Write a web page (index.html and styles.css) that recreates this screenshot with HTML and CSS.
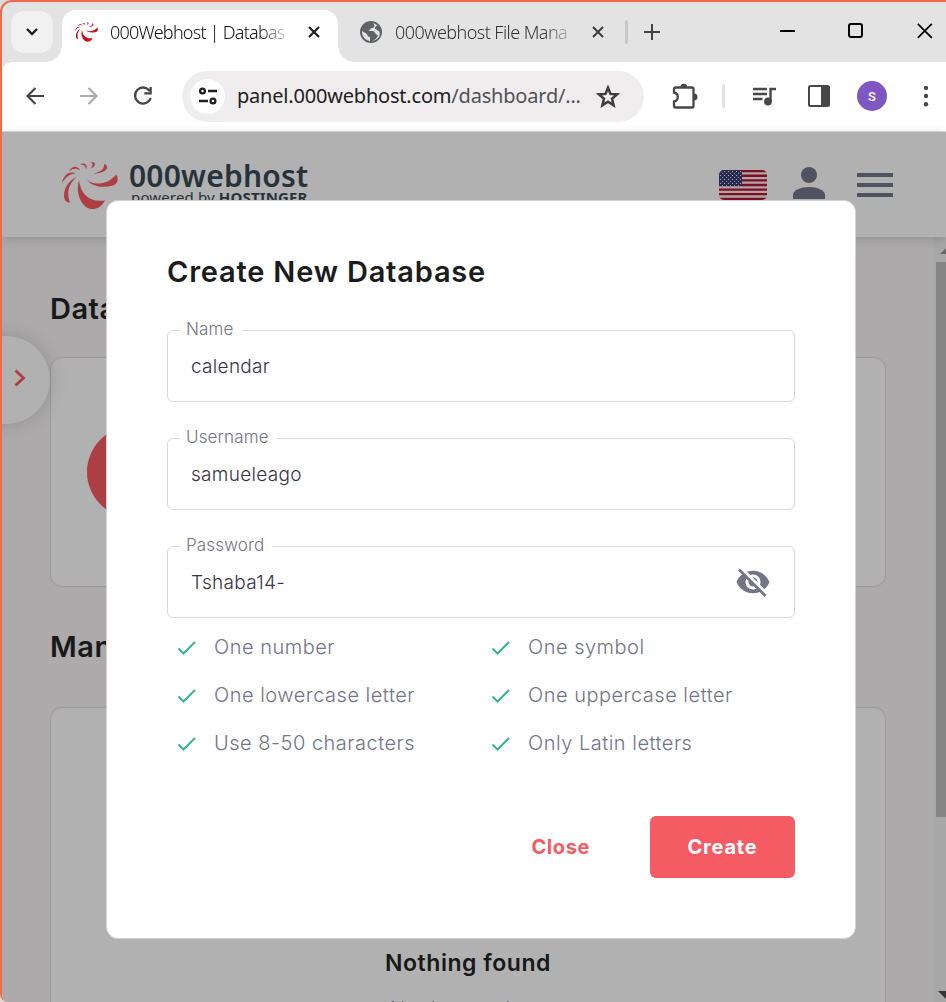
FILE: index.html
```
<!DOCTYPE html>
<html lang="en">
<head>
<meta charset="utf-8">
<title>000Webhost | Database Manager</title>
<link rel="stylesheet" href="styles.css">
</head>
<body>
<svg class="defs" width="0" height="0">
  <symbol id="swirl" viewBox="0 0 56 48">
    <path d="M25 18C30 24 46 24 54 13C57 17 56 22 51 24C41 27 29 25 25 18Z"/>
    <path d="M17 19C19 32 26 41 43 39C39 46 34 48 29 47.500C20 46 13 32 17 19Z"/>
    <path d="M15 15C7 22 4 30 8 41C5 41.500 2 39 2 34C2 26 7 19 15 15Z"/>
    <path d="M31 12C38 10.500 43 8 42 2.500C48 4 46 12 31 12Z"/>
    <path d="M28 7C31.500 5 31 2 29 0.500C35 0 34 6 28 7Z"/>
    <path d="M24 8C24 5 22 3 18 3C21 0.500 27 3 24 8Z"/>
    <path d="M18 9C14 6 10 7 7 10C10 4 16 4 18 9Z"/>
    <path d="M14 12C8 12 3 16 0 22C1 14 7 9 14 12Z"/>
  </symbol>
  <symbol id="check" viewBox="0 0 20 16">
    <path d="M1.5 8.500L6.500 13.500L18 2" fill="none" stroke="#35b58b" stroke-width="2"/>
  </symbol>
</svg>
<div class="window">
  <div class="tabstrip">
    <div class="tab-search"><svg width="14" height="10" viewBox="0 0 14 10"><path d="M2 2l5 5 5-5" fill="none" stroke="#1f1f1f" stroke-width="2.4"/></svg></div>
    <div class="tab tab-active">
      <svg class="favicon" width="23" height="20"><use href="#swirl"/></svg>
      <span class="tab-title t1">000Webhost | Databas</span>
      <svg class="tab-close" width="12" height="12" viewBox="0 0 12 12"><path d="M1 1l10 10M11 1L1 11" stroke="#1f1f1f" stroke-width="2.2"/></svg>
    </div>
    <div class="tab tab-idle">
      <svg class="globe" width="22" height="22" viewBox="0 0 22 22"><circle cx="11" cy="11" r="11" fill="#5f6368"/><path d="M13 2C15 4 15 7 12 7C10 7 10 10 8 10H13C15 10 15 14 18 14C17 18 13 20 10 20V16C8 16 7 14 7 13L2 10C2 13 3 17 7 19C10 21 16 20 19 16C20 14 20 12 19 10C17 10 17 8 15 8C15 5 17 5 17 4Z" fill="#e3e3e3"/></svg>
      <span class="tab-title t2">000webhost File Mana</span>
      <svg class="tab-close" width="12" height="12" viewBox="0 0 12 12"><path d="M1 1l10 10M11 1L1 11" stroke="#3c3c3c" stroke-width="2"/></svg>
    </div>
    <i class="tab-sep"></i>
    <svg class="plus" width="16" height="16" viewBox="0 0 16 16"><path d="M8 0v16M0 8h16" stroke="#444" stroke-width="2"/></svg>
    <div class="controls">
      <svg width="15" height="16" viewBox="0 0 15 16"><path d="M0 8h15" stroke="#000" stroke-width="2"/></svg>
      <svg width="16" height="16" viewBox="0 0 16 16"><rect x="1" y="1" width="13" height="13" rx="2" fill="none" stroke="#000" stroke-width="2"/></svg>
      <svg width="16" height="16" viewBox="0 0 16 16"><path d="M.8.8l14 14M14.800.8L.8 14.800" stroke="#000" stroke-width="1.800"/></svg>
    </div>
  </div>

  <div class="toolbar">
    <svg class="back" width="18" height="18" viewBox="0 0 18 18"><path d="M18 9H2M9.500 1L1.500 9l8 8" fill="none" stroke="#474747" stroke-width="2.200"/></svg>
    <svg class="fwd" width="18" height="18" viewBox="0 0 18 18"><path d="M0 9h16M8.500 1l8 8-8 8" fill="none" stroke="#ababab" stroke-width="2.200"/></svg>
    <svg class="reload" width="20" height="20" viewBox="0 0 20 20"><path d="M16.700 5A8 8 0 1 0 17.700 12" fill="none" stroke="#474747" stroke-width="2.300"/><path d="M18.800 1v7.500h-7.500V6.300h5.200V1z" fill="#474747"/></svg>
    <div class="omnibox">
      <span class="site"><svg width="20" height="18" viewBox="0 0 20 18" fill="none" stroke="#1f1f1f" stroke-width="2.300"><circle cx="4.500" cy="4" r="2.400"/><path d="M10 4h9M1 14h9"/><circle cx="15" cy="14" r="2.400"/></svg></span>
      <span class="url">panel.000webhost.com<span class="path">/dashboard/...</span></span>
      <svg class="star" width="24" height="23" viewBox="0 0 24 23"><path d="M12 2.700l2.500 6.200 6.600.5-5.100 4.300 1.600 6.500L12 16.700l-5.600 3.500L8 13.700 2.900 9.400l6.600-.5z" fill="none" stroke="#3c3c3c" stroke-width="2.500"/></svg>
    </div>
    <svg class="ext" width="26" height="26" viewBox="0 0 26 26"><path d="M4 4.500h16q1.500 0 1.500 1.500v17q0 1.500-1.500 1.500H3.500Q2 24.500 2 23v-4.500c5-1 5-8 0-9V6q0-1.500 2-1.500z" fill="none" stroke="#474747" stroke-width="2.300"/><path d="M8.500 4a3.300 3.300 0 0 1 6.600 0zM22 10.500a3.500 3.500 0 0 1 0 7z" fill="#474747"/></svg>
    <i class="tool-sep"></i>
    <svg class="media" width="24" height="19" viewBox="0 0 24 19"><path d="M0 2h14M0 7h14M0 12h9.500M17.500 14V2H23" fill="none" stroke="#474747" stroke-width="2.400"/><circle cx="15" cy="14.500" r="3.900" fill="#474747"/></svg>
    <svg class="panel" width="22" height="22" viewBox="0 0 22 22"><rect x="1" y="1" width="20" height="20" rx="1.500" fill="none" stroke="#474747" stroke-width="2"/><path d="M13 1h8v20h-8z" fill="#474747"/></svg>
    <span class="avatar">S</span>
    <svg class="dots" width="6" height="22" viewBox="0 0 6 22" fill="#474747"><circle cx="3" cy="2.900" r="2.200"/><circle cx="3" cy="11" r="2.200"/><circle cx="3" cy="19.200" r="2.200"/></svg>
  </div>

  <div class="page">
    <header class="site-header">
      <svg class="logo-mark" width="56" height="49" viewBox="0 0 56 48"><use href="#swirl"/></svg>
      <div class="brand"><div class="brand-name">000webhost</div><div class="brand-sub">powered by <b>HOSTINGER</b></div></div>
      <svg class="flag" width="48" height="30" viewBox="0 0 48 30">
        <defs><clipPath id="fc"><rect width="48" height="30" rx="5"/></clipPath>
        <pattern id="stars" width="4" height="4" patternUnits="userSpaceOnUse"><rect x="1" y="1" width="1" height="1" fill="#a5a5b5"/><rect x="3" y="3" width="1" height="1" fill="#9090a5"/></pattern></defs>
        <g clip-path="url(#fc)"><rect width="48" height="30" fill="#b0a5a9"/><path d="M0 1.150h48M0 5.770h48M0 10.380h48M0 15h48M0 19.600h48M0 24.200h48M0 28.850h48" stroke="#7e1022" stroke-width="2.310"/><rect width="23" height="16" fill="#2b2b52"/><rect width="23" height="16" fill="url(#stars)"/></g>
      </svg>
      <svg class="user" width="32" height="32" viewBox="0 0 32 32" fill="#50525f"><circle cx="16" cy="8" r="8"/><path d="M0 32v-4c0-5 8-8 16-8s16 3 16 8v4z"/></svg>
      <div class="burger"><i></i><i></i><i></i></div>
    </header>
    <main class="content">
      <h2>Databases</h2>
      <section class="card card-top"><span class="disc"></span></section>
      <h2 class="second">Manage</h2>
      <section class="card card-list"><div class="empty">Nothing found</div><div class="empty-sub">No data to show</div></section>
    </main>
    <div class="drawer"><svg width="12" height="18" viewBox="0 0 12 18"><path d="M1.500 1.500L9.500 9l-8 7.500" fill="none" stroke="#ac3e44" stroke-width="2.800"/></svg></div>
    <div class="scrollbar"><i class="up"></i><i class="thumb"></i><i class="down"></i></div>
  </div>

  <div class="modal">
    <h1>Create New Database</h1>
    <fieldset><legend class="l1">Name</legend><span class="v1">calendar</span></fieldset>
    <fieldset><legend class="l2">Username</legend><span class="v2">samueleago</span></fieldset>
    <fieldset><legend class="l3">Password</legend><span class="v3">Tshaba14-</span>
      <svg class="eye" width="36" height="36" viewBox="0 0 24 24" fill="#727586"><path d="M12 7c2.760 0 5 2.240 5 5 0 .65-.13 1.260-.36 1.830l2.920 2.920c1.510-1.260 2.700-2.890 3.430-4.750-1.730-4.390-6-7.500-11-7.500-1.400 0-2.740.25-3.980.7l2.160 2.160C10.740 7.130 11.350 7 12 7zM2 4.270l2.280 2.280.46.46C3.080 8.300 1.780 10.020 1 12c1.730 4.390 6 7.500 11 7.500 1.550 0 3.030-.3 4.380-.84l.42.42L19.730 22 21 20.730 3.270 3 2 4.270zM7.530 9.800l1.550 1.550c-.05.21-.08.43-.08.650 0 1.660 1.340 3 3 3 .22 0 .44-.03.65-.08l1.550 1.550c-.67.33-1.410.53-2.200.53-2.760 0-5-2.240-5-5 0-.79.2-1.530.53-2.200zm4.310-.78l3.150 3.150.02-.16c0-1.660-1.340-3-3-3l-.17.01z"/></svg>
    </fieldset>
    <ul class="rules">
      <li><svg width="20" height="16"><use href="#check"/></svg><span>One number</span></li>
      <li><svg width="20" height="16"><use href="#check"/></svg><span>One symbol</span></li>
      <li><svg width="20" height="16"><use href="#check"/></svg><span>One lowercase letter</span></li>
      <li><svg width="20" height="16"><use href="#check"/></svg><span>One uppercase letter</span></li>
      <li><svg width="20" height="16"><use href="#check"/></svg><span>Use 8-50 characters</span></li>
      <li><svg width="20" height="16"><use href="#check"/></svg><span>Only Latin letters</span></li>
    </ul>
    <div class="actions"><span class="close">Close</span><span class="create">Create</span></div>
  </div>
</div>
</body>
</html>
```
FILE: styles.css
```
* { box-sizing: border-box; }
html, body { margin: 0; height: 1002px; overflow: hidden; background: #dcdcdc; }
body { font-family: Inter, "Open Sans", sans-serif; }
svg { display: block; flex: none; }
.defs { position: absolute; }
.window { position: relative; width: 966px; height: 1002px; border: 2px solid #f4694e; border-bottom: 0; border-radius: 12px 0 0 8px; overflow: hidden; background: #e3e3e3; display: flex; flex-direction: column; }

.tabstrip { height: 60px; display: flex; align-items: flex-start; width: 944px; flex: none; font-family: "Noto Sans", sans-serif; }
.tab-search { width: 42px; height: 42px; margin: 9px 9px 0 9px; border-radius: 14px; background: #f1f1f1; display: flex; align-items: center; justify-content: center; flex: none; }
.tab { display: flex; align-items: center; flex: none; position: relative; }
.tab-active { margin-top: 8px; width: 276px; height: 52px; background: #fff; border-radius: 14px 14px 0 0; padding: 0 0 8px 13px; }
.tab-active::before, .tab-active::after { content: ""; position: absolute; bottom: 0; width: 16px; height: 16px; }
.tab-active::before { left: -16px; background: radial-gradient(circle at 0 0, transparent 15.500px, #fff 16px); }
.tab-active::after { right: -16px; background: radial-gradient(circle at 100% 0, transparent 15.500px, #fff 16px); }
.favicon { fill: #cc1016; }
.tab-title { width: 180px; height: 30px; line-height: 30px; font-size: 18px; font-weight: 350; white-space: nowrap; overflow: hidden; -webkit-mask-image: linear-gradient(90deg, #000 82%, transparent 102%); mask-image: linear-gradient(90deg, #000 82%, transparent 102%); }
.t1 { margin-left: 12px; color: #111; letter-spacing: -.75px; }
.t2 { margin-left: 13px; color: #333; letter-spacing: -.55px; }
.tab-close { margin-left: 18px; }
.tab-idle { margin: 8px 0 0 22px; height: 44px; }
.tab-idle .tab-close { margin: 0 1px 0 17px; }
.tab-sep { width: 3px; height: 24px; margin: 18px 0 0 20px; background: #c7c7c7; border-radius: 2px; }
.plus { margin: 22px 0 0 16px; }
.controls { display: flex; margin: 21px 0 0 120px; gap: 53px; }

.toolbar { height: 70px; width: 944px; background: #fff; border-bottom: 1px solid #dadcdc; border-top-left-radius: 10px; display: flex; align-items: center; flex: none; padding: 0 0 1px 24px; }
.fwd { margin-left: 36px; }
.reload { margin-left: 35px; }
.omnibox { width: 462px; height: 51px; margin-left: 29px; border-radius: 26px; background: #efedee; display: flex; align-items: center; padding-left: 8px; flex: none; }
.site { width: 35px; height: 35px; border-radius: 50%; background: #fff; display: flex; align-items: center; justify-content: center; flex: none; }
.url { margin-left: 12px; width: 347px; font: 20px/30px "Noto Sans", sans-serif; letter-spacing: -.2px; color: #202124; white-space: nowrap; }
.path { color: #505256; }
.star { margin-left: 12px; }
.ext { margin-left: 28px; }
.tool-sep { width: 3px; height: 24px; margin-left: 24px; border-radius: 2px; background: #e2e2e2; }
.media { margin-left: 28px; }
.panel { margin-left: 31px; }
.avatar { width: 30px; height: 30px; margin-left: 27px; border-radius: 50%; background: #7e57c2; color: #fff; display: flex; align-items: center; justify-content: center; font: 500 13px Roboto, sans-serif; }
.dots { margin-left: 36px; }

.page { position: relative; height: 870px; width: 944px; background: #acaaaa; flex: none; }
.site-header { position: relative; z-index: 2; height: 105px; background: #b1b1b1; box-shadow: 0 2px 10px rgba(0,0,0,.17); display: flex; align-items: flex-start; padding-left: 60px; }
.logo-mark { fill: #ac3e44; margin-top: 29px; }
.brand { margin: 24px 0 0 11px; width: 201px; color: #27333a; font-family: "Noto Sans", sans-serif; white-space: nowrap; }
.brand-name { font-size: 30px; line-height: 40px; font-weight: 600; letter-spacing: .2px; }
.brand-sub { font-size: 15px; line-height: 18px; margin: -8px 0 0 2px; letter-spacing: .15px; }
.flag { margin: 38px 0 0 389px; }
.user { margin: 35px 0 0 26px; }
.burger { width: 36px; margin: 41px 0 0 32px; display: flex; flex-direction: column; gap: 6px; }
.burger i { height: 4px; background: #50525f; }
.content { padding: 48px 0 0 48px; height: 765px; overflow: hidden; }
h2 { margin: 0; height: 48px; line-height: 48px; font-size: 29px; font-weight: 600; color: #171818; letter-spacing: .5px; }
.card { width: 836px; border: 1px solid #999a9a; border-radius: 12px; background: #b1b1b1; overflow: hidden; }
.card-top { height: 230px; margin-top: 24px; padding: 68px 0 0 36px; }
.disc { display: block; width: 92px; height: 92px; border-radius: 50%; background: #ac3e44; }
.second { margin-top: 36px; }
.card-list { height: 420px; margin-top: 36px; padding-top: 235px; text-align: center; }
.empty { font-size: 23px; font-weight: 600; line-height: 40px; color: #171818; letter-spacing: .55px; }
.empty-sub { font-size: 20px; line-height: 28px; margin-top: 12px; color: #50525f; letter-spacing: .3px; font-weight: 350; }
.drawer { position: absolute; z-index: 1; left: -40px; top: 204px; width: 88px; height: 88px; border-radius: 50%; background: #b1b1b1; box-shadow: 0 0 18px rgba(0,0,0,.17); padding: 33px 0 0 52px; }
.scrollbar { position: absolute; top: 105px; right: 0; width: 12px; height: 765px; background: #a7a7a7; display: flex; flex-direction: column; align-items: flex-end; overflow: hidden; }
.up { margin: 10px -8px 0 0; border: 7px solid transparent; border-top: 0; border-bottom: 7px solid #686868; }
.thumb { width: 10px; height: 555px; margin-top: 8px; background: #858585; }
.down { margin: 174px -8px 0 0; border: 8px solid transparent; border-bottom: 0; border-top: 8px solid #353535; }

.modal { position: absolute; z-index: 5; left: 104px; top: 198px; width: 750px; height: 739px; border: 1px solid #d2d2d2; border-radius: 12px; background: #fff; padding: 50px 60px 0; }
h1 { margin: 0; height: 42px; font-size: 29px; line-height: 42px; font-weight: 600; color: #1b1c1c; letter-spacing: .8px; white-space: nowrap; }
fieldset { position: relative; min-width: 0; margin: 26px 0 0; height: 82px; padding: 0 23px; border: 1px solid #d9d9dc; border-radius: 6px; }
h1 + fieldset { margin-top: 27px; }
legend { margin-left: -11px; padding: 0 8px 0 6px; height: 20px; line-height: 18px; font-size: 17px; font-weight: 350; letter-spacing: .15px; color: #727586; }
fieldset span { display: block; line-height: 32px; margin-top: 11px; font-size: 19px; font-weight: 350; letter-spacing: .3px; color: #36344d; }
.eye { position: absolute; right: 23px; top: 8px; }
.rules { list-style: none; margin: 5px 0 0; padding: 0 0 0 10px; display: grid; grid-template-columns: 314px 1fr; }
.rules li { height: 48px; display: flex; align-items: center; gap: 17px; font-size: 20px; line-height: 48px; font-weight: 350; letter-spacing: .5px; color: #727586; white-space: nowrap; }
.rules svg { margin-top: 2px; }
.actions { margin-top: 49px; display: flex; justify-content: flex-end; align-items: center; font-size: 20px; font-weight: 700; letter-spacing: .6px; }
.close { color: #f55b62; margin-right: 60px; }
.create { width: 145px; height: 62px; border-radius: 6px; background: #f55b62; color: #fff; display: flex; align-items: center; justify-content: center; letter-spacing: .8px; }
```
